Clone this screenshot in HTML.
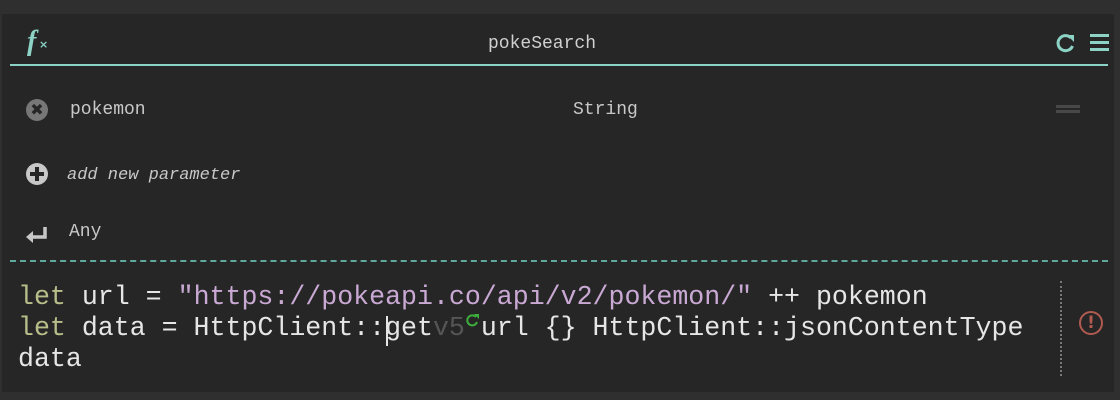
<!DOCTYPE html>
<html><head><style>
body{margin:0;width:1120px;height:400px;background:#2f2f2f;overflow:hidden;position:relative;font-family:"Liberation Mono","DejaVu Sans Mono",monospace}
#p{position:absolute;left:2px;top:14px;width:1112px;height:378px;background:#262626}
.a{position:absolute;white-space:pre}
.s{font-size:18px;color:#c8c8c8}
.c{font-size:26.6px;line-height:31px;color:#e6e6e6;left:18px;top:282px}
.k{color:#b8be8a}.str{color:#c9a9d4}.g{color:#555}
</style></head><body>
<div id="p"></div>
<div class="a" style="left:27px;top:26px;font:italic bold 28px 'Liberation Serif',serif;color:#8cd3c5">f</div>
<div class="a" style="left:39px;top:38px;font:bold 11px 'DejaVu Sans',sans-serif;color:#8cd3c5">×</div>
<div class="a s" style="left:488px;top:34px;color:#d0d0d0">pokeSearch</div>
<svg class="a" style="left:1054px;top:31px" width="24" height="24" viewBox="0 0 24 24"><path d="M17 7A7.5 7.5 0 1 0 18.5 15" fill="none" stroke="#8cd3c5" stroke-width="3"/><path d="M13 4h7v7z" fill="#8cd3c5"/></svg>
<div class="a" style="left:1090px;top:34px;width:19px;height:3px;background:#8cd3c5;box-shadow:0 7px 0 #8cd3c5,0 14px 0 #8cd3c5"></div>
<div class="a" style="left:10px;top:64px;width:1098px;height:2px;background:#8cd3c5"></div>
<div class="a" style="left:26px;top:99px;width:22px;height:22px;border-radius:50%;background:#777;color:#262626;font:bold 16px/22px 'DejaVu Sans',sans-serif;text-align:center">✖</div>
<div class="a s" style="left:70px;top:100px">pokemon</div>
<div class="a s" style="left:573px;top:100px">String</div>
<div class="a" style="left:1056px;top:105px;width:24px;height:3px;background:#484848;box-shadow:0 5px 0 #484848"></div>
<div class="a" style="left:26px;top:163px;width:22px;height:22px;border-radius:50%;background:#c8c8c8"></div>
<div class="a" style="left:30px;top:172px;width:14px;height:4px;background:#262626"></div>
<div class="a" style="left:35px;top:167px;width:4px;height:14px;background:#262626"></div>
<div class="a s" style="left:67px;top:166px;font-style:italic;font-size:17px">add new parameter</div>
<svg class="a" style="left:25px;top:226px" width="24" height="18" viewBox="0 0 24 18"><path d="M20 1v10H7" fill="none" stroke="#c8c8c8" stroke-width="3.5"/><path d="M1 11l7-6v12z" fill="#c8c8c8"/></svg>
<div class="a s" style="left:69px;top:222px">Any</div>
<div class="a" style="left:10px;top:260px;width:1098px;border-top:2px dashed #5fa89b"></div>
<div class="a c"><span class="k">let</span> url = <span class="str">"https://pokeapi.co/api/v2/pokemon/"</span> ++ pokemon
<span class="k">let</span> data = HttpClient::get<span class="g">v5</span> url {} HttpClient::jsonContentType
data</div>
<div class="a" style="left:386px;top:316px;width:2px;height:30px;background:#e6e6e6"></div>
<svg class="a" style="left:466px;top:313px" width="14" height="14" viewBox="0 0 14 14"><path d="M10 4A5 5 0 1 0 11 9" fill="none" stroke="#3cae3c" stroke-width="2"/><path d="M8 1h5v5z" fill="#3cae3c"/></svg>
<div class="a" style="left:1060px;top:281px;height:95px;border-left:2px dotted #777"></div>
<div class="a" style="left:1079px;top:311px;width:20px;height:20px;border:2px solid #b05a50;border-radius:50%;color:#b05a50;font:bold 17px/20px 'DejaVu Sans',sans-serif;text-align:center">!</div>
</body></html>
